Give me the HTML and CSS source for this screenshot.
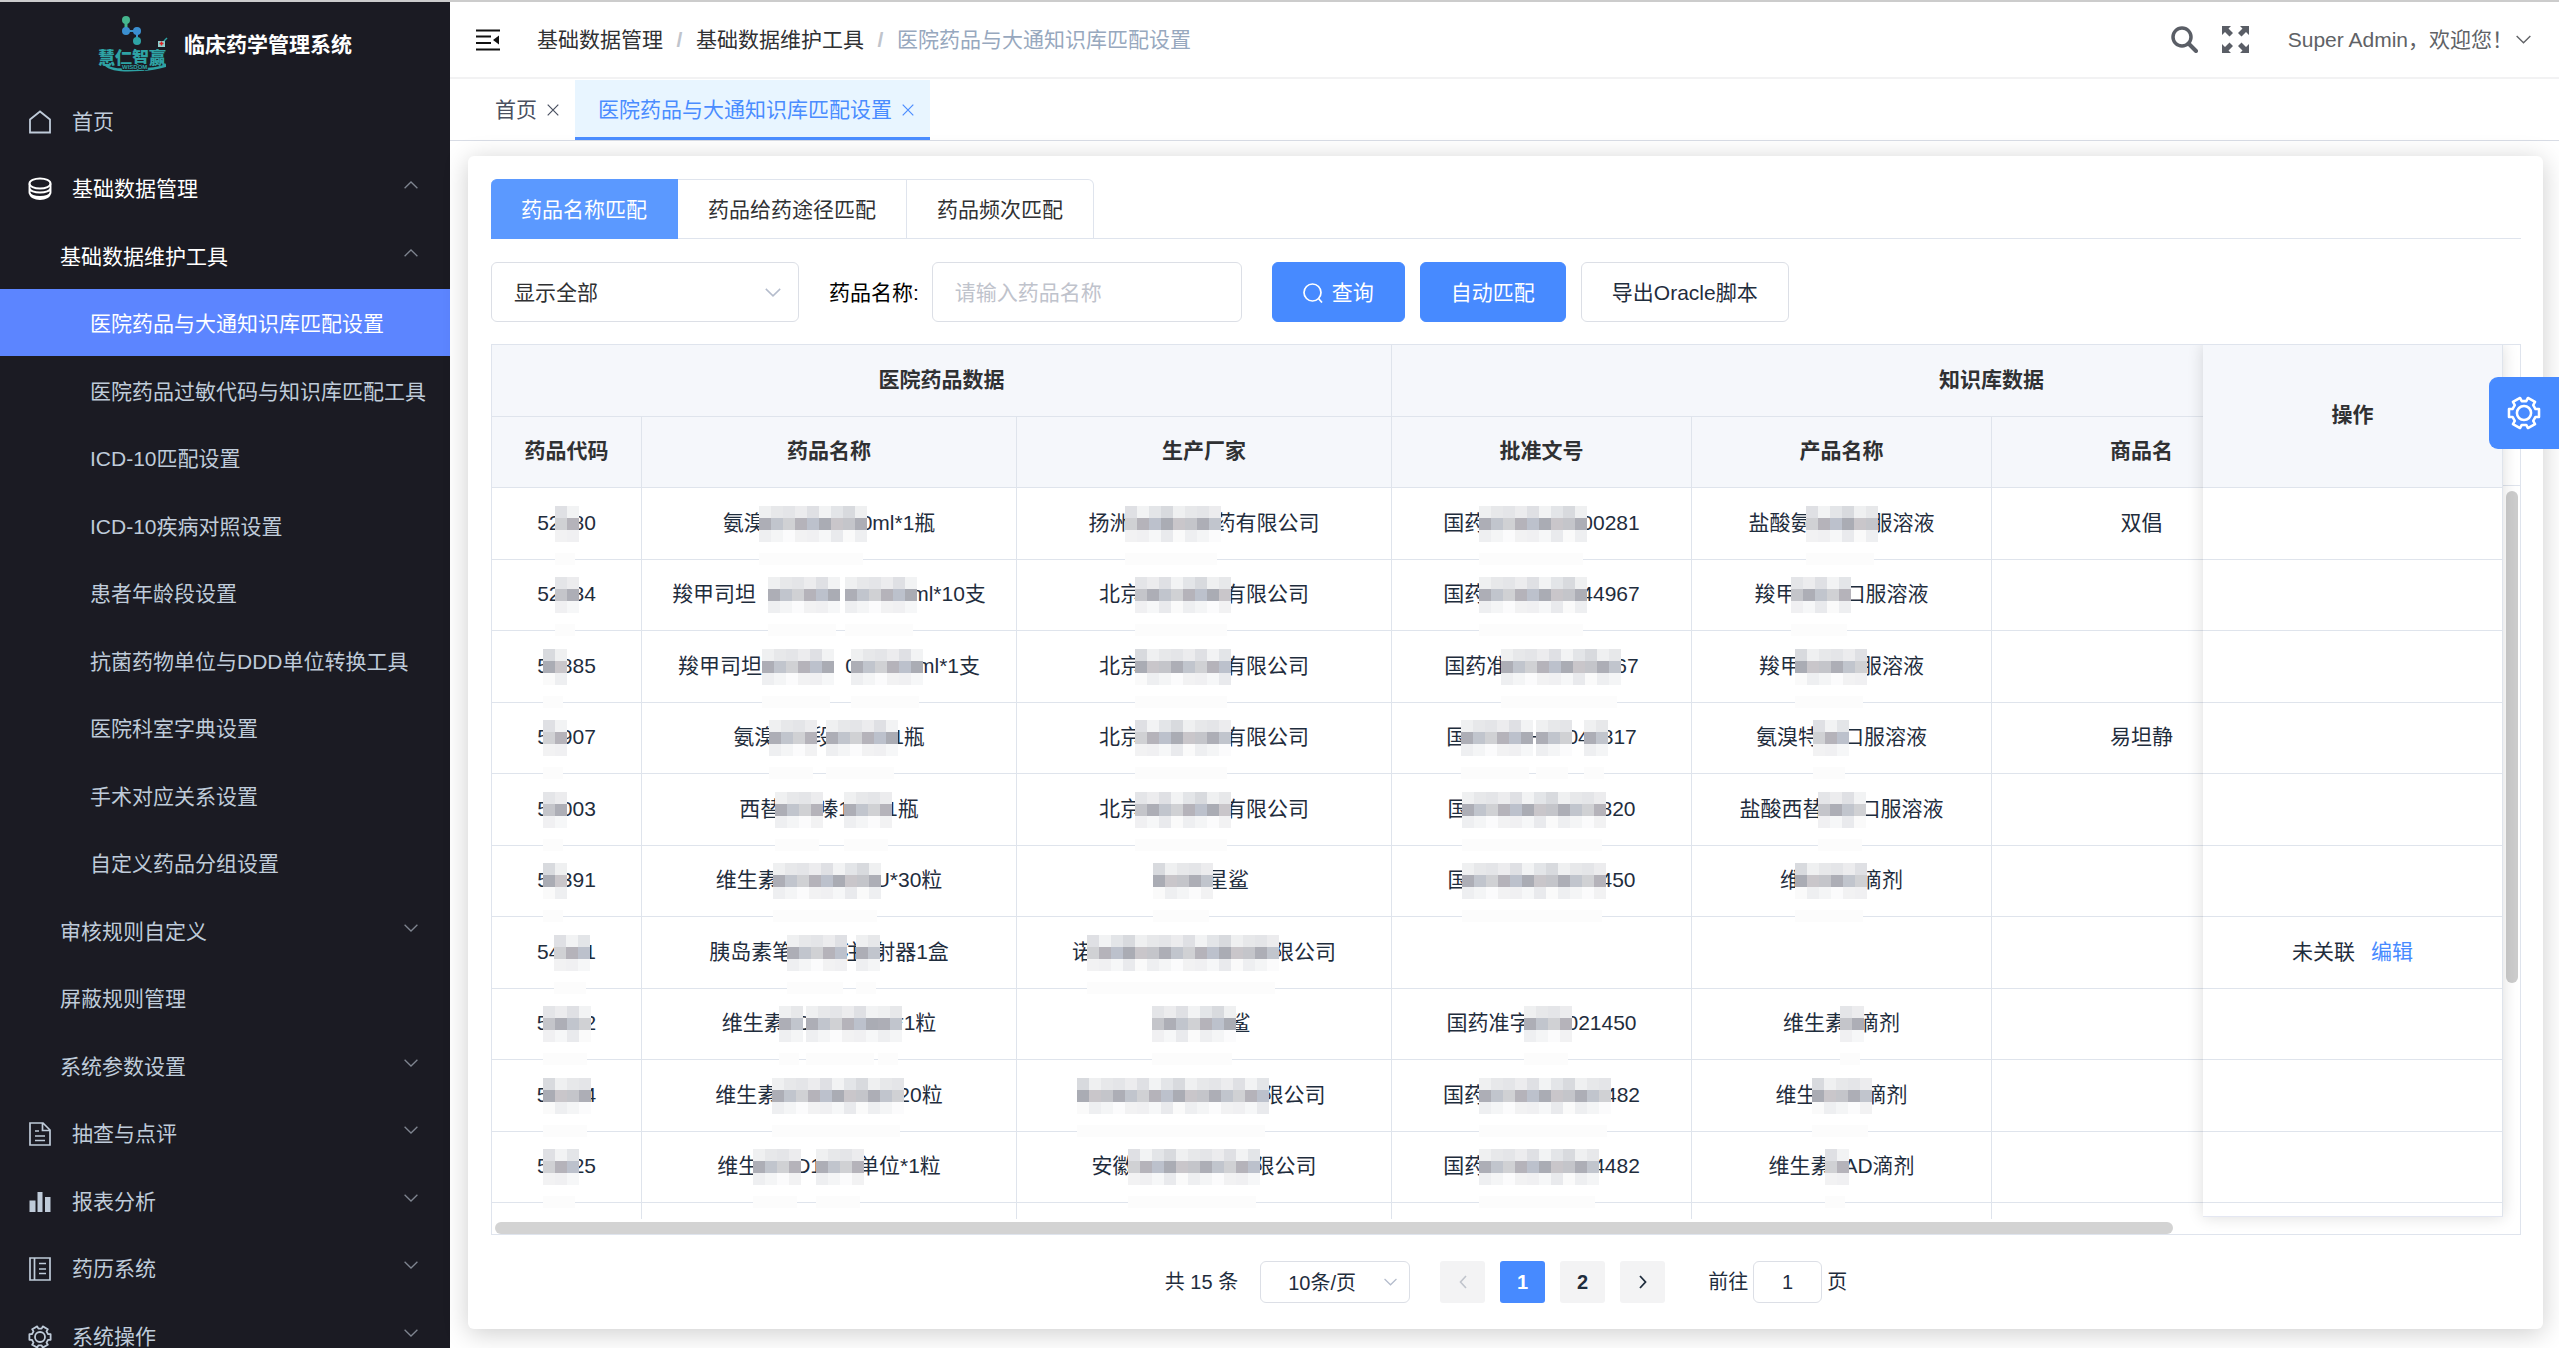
FILE: index.html
```html
<!DOCTYPE html>
<html lang="zh-CN">
<head>
<meta charset="utf-8">
<title>临床药学管理系统</title>
<link rel="stylesheet" href="styles.css">
</head>
<body>
<svg class="defs" aria-hidden="true">
  <symbol id="i-down" viewBox="0 0 14 8"><path d="M.6.8 7 7 13.4.8" fill="none" stroke="currentColor" stroke-width="1.3"/></symbol>
  <symbol id="i-up" viewBox="0 0 14 8"><path d="M.6 7.2 7 1l6.400 6.200" fill="none" stroke="currentColor" stroke-width="1.3"/></symbol>
  <symbol id="i-close" viewBox="0 0 12 12"><path d="M.7.7 11.300 11.300M11.300.7.7 11.300" fill="none" stroke="currentColor" stroke-width="1.200"/></symbol>
  <symbol id="i-gear" viewBox="0 0 24 24"><g fill="none" stroke="currentColor" stroke-width="1.800" stroke-linejoin="round"><path d="M20.100 9.200 22.600 9.200V14.800H20.100L18.500 17.600 19.800 19.800 14.800 22.600 13.600 20.400H10.400L9.200 22.600 4.200 19.800 5.500 17.600 3.900 14.800H1.400V9.200H3.900L5.500 6.400 4.200 4.200 9.200 1.400 10.400 3.600H13.600L14.800 1.400 19.800 4.200 18.500 6.400Z"/><circle cx="12" cy="12" r="5"/></g></symbol>
</svg>
<div class="app">
  <aside class="sidebar">
    <div class="brand">
      <svg class="logo" viewBox="0 0 72 60" aria-hidden="true">
        <path d="M29 6V16H40V26" fill="none" stroke="#3a93c8" stroke-width="2"/>
        <path d="M29 6v8" stroke="#45b58d" stroke-width="3"/>
        <circle cx="29" cy="5" r="4" fill="#45b58d"/><circle cx="29" cy="16" r="4" fill="#3b8fd0"/><circle cx="40" cy="16" r="4" fill="#3b8fd0"/><circle cx="40" cy="26" r="4" fill="#2ea3a5"/>
        <path d="M61 26h7v6h-7z" fill="#8fd0cf"/><path d="m67 26 3-3" stroke="#2ea3a5" stroke-width="1.500"/>
        <path d="M64.500 26.500v4M62.500 28.500h4" stroke="#e02020" stroke-width="1.500"/>
        <text class="logo-name" x="1" y="49">慧仁智赢</text>
        <path d="M7 50c6 7 22 7 36 6 10 0 18-2 26-4v-3c-8 3-16 4-26 4-14 1-28 1-32-3z" fill="#2ea3a5"/>
        <text class="logo-sub" x="25" y="54">WISDOM</text>
      </svg>
      <h1 class="brand-title">临床药学管理系统</h1>
    </div>
    <ul class="menu">
      <li><a href="#" class="l1"><svg class="mi" viewBox="0 0 24 24"><path d="M2 22.500V9.500L12 1.500l10 8v13z" fill="none" stroke="currentColor" stroke-width="1.800"/></svg>首页</a></li>
      <li><a href="#" class="l1 open"><svg class="mi" viewBox="0 0 24 24"><g fill="none" stroke="currentColor" stroke-width="1.900"><ellipse cx="12" cy="6.500" rx="10.500" ry="5"/><path d="M1.500 6.500v4.500c0 6 21 6 21 0V6.500M1.500 11v4.500c0 6 21 6 21 0V11M2 16c0 8 20 8 20 0"/></g></svg>基础数据管理<svg class="arrow"><use href="#i-up"/></svg></a></li>
      <li><a href="#" class="l2 open">基础数据维护工具<svg class="arrow"><use href="#i-up"/></svg></a></li>
      <li><a href="#" class="l3 active">医院药品与大通知识库匹配设置</a></li>
      <li><a href="#" class="l3">医院药品过敏代码与知识库匹配工具</a></li>
      <li><a href="#" class="l3">ICD-10匹配设置</a></li>
      <li><a href="#" class="l3">ICD-10疾病对照设置</a></li>
      <li><a href="#" class="l3">患者年龄段设置</a></li>
      <li><a href="#" class="l3">抗菌药物单位与DDD单位转换工具</a></li>
      <li><a href="#" class="l3">医院科室字典设置</a></li>
      <li><a href="#" class="l3">手术对应关系设置</a></li>
      <li><a href="#" class="l3">自定义药品分组设置</a></li>
      <li><a href="#" class="l2">审核规则自定义<svg class="arrow"><use href="#i-down"/></svg></a></li>
      <li><a href="#" class="l2">屏蔽规则管理</a></li>
      <li><a href="#" class="l2">系统参数设置<svg class="arrow"><use href="#i-down"/></svg></a></li>
      <li><a href="#" class="l1"><svg class="mi" viewBox="0 0 24 24"><path d="M2 1h13l7 7v15H2zM14.500 1v7.500H22M7 9h4M7 14h10M7 18.500h10" fill="none" stroke="currentColor" stroke-width="1.700"/></svg>抽查与点评<svg class="arrow"><use href="#i-down"/></svg></a></li>
      <li><a href="#" class="l1"><svg class="mi" viewBox="0 0 24 24"><path d="M1.500 10.500h6V22h-6zM9.500 2h5v20h-5zM17 7h5.500v15H17z" fill="currentColor"/></svg>报表分析<svg class="arrow"><use href="#i-down"/></svg></a></li>
      <li><a href="#" class="l1"><svg class="mi" viewBox="0 0 24 24"><path d="M2 1h20v22H2zM6.500 1v22M11 6.500h7M11 12h7M11 16.500h7" fill="none" stroke="currentColor" stroke-width="1.700"/></svg>药历系统<svg class="arrow"><use href="#i-down"/></svg></a></li>
      <li><a href="#" class="l1"><svg class="mi"><use href="#i-gear"/></svg>系统操作<svg class="arrow"><use href="#i-down"/></svg></a></li>
    </ul>
  </aside>

  <main class="main">
    <header class="topbar">
      <button class="plain" aria-label="折叠菜单"><svg class="burger" viewBox="0 0 24 22"><path d="M0 1.500h24M0 7.500h15M0 14h15M0 20.500h24" stroke="#111" stroke-width="2"/><path d="M23 6.500v9l-6-4.500z" fill="#111"/></svg></button>
      <nav class="crumbs"><a href="#">基础数据管理</a><i>/</i><a href="#">基础数据维护工具</a><i>/</i><span>医院药品与大通知识库匹配设置</span></nav>
      <div class="tools">
        <button class="plain" aria-label="搜索"><svg class="tool" viewBox="0 0 27 27"><circle cx="11" cy="11" r="9" fill="none" stroke="currentColor" stroke-width="3.500"/><path d="m17.500 17.500 7.500 7.500" stroke="currentColor" stroke-width="4" stroke-linecap="round"/></svg></button>
        <button class="plain" aria-label="全屏"><svg class="tool" viewBox="0 0 27 27"><path d="M0 0h9L6.500 2.500 11 7 7.500 10.500 3 6 0 9zM27 0v9l-3-3-4.500 4.500L16 7l4.500-4.500L18 0zM0 27v-9l3 3 4.500-4.500L11 20l-4.500 4.500L9 27zM27 27h-9l2.500-2.500L16 20l3.500-3.500L24 21l3-3z" fill="currentColor"/></svg></button>
        <button class="plain user">Super Admin，欢迎您！<svg class="user-arrow"><use href="#i-down"/></svg></button>
      </div>
    </header>
    <nav class="views">
      <a href="#" class="view">首页<svg><use href="#i-close"/></svg></a>
      <a href="#" class="view current">医院药品与大通知识库匹配设置<svg><use href="#i-close"/></svg></a>
    </nav>

    <section class="card">
      <div class="tabs" role="tablist">
        <button role="tab" class="tab on" aria-selected="true">药品名称匹配</button>
        <button role="tab" class="tab">药品给药途径匹配</button>
        <button role="tab" class="tab">药品频次匹配</button>
      </div>
      <form class="filters">
        <div class="picker picker-wide">
          <select aria-label="显示范围"><option>显示全部</option></select>
          <svg><use href="#i-down"/></svg>
        </div>
        <label for="drug">药品名称:</label>
        <input id="drug" type="text" placeholder="请输入药品名称">
        <button type="button" class="btn primary query"><svg viewBox="0 0 20 20"><circle cx="9.500" cy="9.500" r="8.500" fill="none" stroke="currentColor" stroke-width="1.700"/><path d="m15.500 15.500 3.500 4" stroke="currentColor" stroke-width="1.700"/></svg>查询</button>
        <button type="button" class="btn primary">自动匹配</button>
        <button type="button" class="btn">导出Oracle脚本</button>
      </form>

      <div class="grid">
        <div class="grid-main">
          <table class="data">
            <colgroup><col class="c-code"><col class="c-name"><col class="c-name"><col class="c-kb"><col class="c-kb"><col class="c-kb"><col class="c-kb"></colgroup>
            <thead>
              <tr><th colspan="3">医院药品数据</th><th colspan="4">知识库数据</th></tr>
              <tr><th>药品代码</th><th>药品名称</th><th>生产厂家</th><th>批准文号</th><th>产品名称</th><th>商品名</th><th></th></tr>
            </thead>
            <tbody>
              <tr><td>52<i class="m w24"></i>80</td><td>氨溴<i class="m w108"></i>0ml*1瓶</td><td>扬洲<i class="m w96"></i>药有限公司</td><td>国药<i class="m w108"></i>00281</td><td>盐酸氨<i class="m w72"></i>服溶液</td><td>双倡</td><td></td></tr>
              <tr><td>52<i class="m w24"></i>84</td><td>羧甲司坦&nbsp;&nbsp;&nbsp;<i class="m w72"></i>&nbsp;&nbsp;&nbsp;<i class="m w72"></i>ml*10支</td><td>北京<i class="m w96"></i>有限公司</td><td>国药<i class="m w108"></i>44967</td><td>羧甲<i class="m w60"></i>口服溶液</td><td></td><td></td></tr>
              <tr><td>5<i class="m w24"></i>885</td><td>羧甲司坦&nbsp;<i class="m w72"></i>&nbsp;&nbsp;&nbsp;0<i class="m w72"></i>ml*1支</td><td>北京<i class="m w96"></i>有限公司</td><td>国药准<i class="m w120"></i>67</td><td>羧甲<i class="m w72"></i>服溶液</td><td></td><td></td></tr>
              <tr><td>5<i class="m w24"></i>907</td><td>氨溴<i class="m w48"></i>段<i class="m w72"></i>1瓶</td><td>北京<i class="m w96"></i>有限公司</td><td>国<i class="m w72"></i>H<i class="m w36"></i>04<i class="m w24"></i>817</td><td>氨溴特<i class="m w36"></i>口服溶液</td><td>易坦静</td><td></td></tr>
              <tr><td>5<i class="m w24"></i>003</td><td>西替<i class="m w48"></i>嗪1<i class="m w48"></i>1瓶</td><td>北京<i class="m w96"></i>有限公司</td><td>国<i class="m w144"></i>820</td><td>盐酸西替<i class="m w48"></i>口服溶液</td><td></td><td></td></tr>
              <tr><td>5<i class="m w24"></i>391</td><td>维生素<i class="m w108"></i>U*30粒</td><td><i class="m w60"></i>星鲨</td><td>国<i class="m w144"></i>450</td><td>维<i class="m w72"></i>滴剂</td><td></td><td></td></tr>
              <tr><td>54<i class="m w36"></i>1</td><td>胰岛素笔<i class="m w60"></i>注<i class="m w24"></i>射器1盒</td><td>诺<i class="m w192"></i>限公司</td><td></td><td></td><td></td><td></td></tr>
              <tr><td>5<i class="m w48"></i>2</td><td>维生素<i class="m w24"></i>D<i class="m w72"></i>0<i class="m w24"></i>*1粒</td><td><i class="m w84"></i>鲨</td><td>国药准字<i class="m w48"></i>021450</td><td>维生素<i class="m w24"></i>滴剂</td><td></td><td></td></tr>
              <tr><td>5<i class="m w48"></i>4</td><td>维生素<i class="m w132"></i>20粒</td><td><i class="m w192"></i>限公司</td><td>国药<i class="m w132"></i>482</td><td>维生<i class="m w60"></i>滴剂</td><td></td><td></td></tr>
              <tr><td>5<i class="m w36"></i>25</td><td>维生<i class="m w48"></i>D1<i class="m w48"></i>单位*1粒</td><td>安徽<i class="m w132"></i>限公司</td><td>国药<i class="m w120"></i>4482</td><td>维生素<i class="m w24"></i>AD滴剂</td><td></td><td></td></tr>
              <tr><td></td><td></td><td></td><td></td><td></td><td></td><td></td></tr>
            </tbody>
          </table>
        </div>
        <div class="grid-fixed">
          <table class="data">
            <thead><tr><th class="tall">操作</th></tr></thead>
            <tbody>
              <tr><td></td></tr><tr><td></td></tr><tr><td></td></tr><tr><td></td></tr><tr><td></td></tr><tr><td></td></tr>
              <tr><td>未关联<a href="#" class="edit">编辑</a></td></tr>
              <tr><td></td></tr><tr><td></td></tr><tr><td></td></tr><tr><td></td></tr>
            </tbody>
          </table>
        </div>
        <div class="gutter"><div class="gutter-head"></div><div class="v-thumb"></div></div>
        <div class="h-track"><div class="h-thumb"></div></div>
      </div>

      <nav class="pager">
        <span class="total">共 15 条</span>
        <div class="picker picker-page">
          <select aria-label="每页条数"><option>10条/页</option></select>
          <svg><use href="#i-down"/></svg>
        </div>
        <button class="pg" disabled aria-label="上一页"><svg viewBox="0 0 8 14"><path d="M7 1 1.500 7 7 13" fill="none" stroke="currentColor" stroke-width="1.600"/></svg></button>
        <button class="pg on">1</button>
        <button class="pg">2</button>
        <button class="pg" aria-label="下一页"><svg viewBox="0 0 8 14"><path d="M1 1l5.500 6L1 13" fill="none" stroke="currentColor" stroke-width="1.800"/></svg></button>
        <label class="jump">前往<input type="text" value="1">页</label>
      </nav>
    </section>
  </main>
</div>
<button class="settings" aria-label="系统设置"><svg><use href="#i-gear"/></svg></button>
</body>
</html>
```
FILE: styles.css
```css
* { box-sizing: border-box; }
body {
  margin: 0;
  font: 21px/30px "Liberation Sans", "Noto Sans CJK SC", sans-serif;
  color: #303133;
  background: #fff;
}
a { color: inherit; text-decoration: none; }
button, input, select { font: inherit; color: inherit; }
svg { display: block; flex: none; }
.defs { position: absolute; width: 0; height: 0; }
.plain { border: 0; background: none; padding: 0; }

.app { display: flex; height: 100vh; overflow: hidden; border-top: 2px solid #ccc; }

/* sidebar */
.sidebar { flex: 0 0 450px; background: #1b1b23; color: #bfcbd9; overflow: hidden; }
.brand { display: flex; align-items: center; gap: 15px; height: 84px; padding: 2px 0 0 97px; }
.logo { width: 72px; height: 60px; }
.logo-name { font: 900 17px "Noto Sans CJK SC", sans-serif; fill: #2ea3a5; }
.logo-sub { font: bold 6px "Liberation Sans", sans-serif; fill: #2ea3a5; stroke: #1b1b23; stroke-width: 2px; paint-order: stroke; }
.brand-title { margin: 0; font-size: 21px; line-height: 30px; color: #fff; }
.menu { margin: 0; padding: 0; list-style: none; }
.menu a { display: flex; align-items: center; height: 67px; padding: 3px 32px 0 0; white-space: nowrap; }
.menu li:nth-child(odd) a { height: 68px; }
.menu .l1 { padding-left: 28px; gap: 20px; }
.menu .l2 { padding-left: 60px; }
.menu .l3 { padding-left: 90px; padding-right: 0; }
.menu .open { color: #fff; }
.menu .active { background: #5c85ff; color: #fff; }
.mi { width: 24px; height: 24px; }
.arrow { width: 14px; height: 8px; margin: 0 0 8px auto; color: #7f8590; }

/* header */
.main { flex: 1; min-width: 0; }
.topbar { display: flex; align-items: center; height: 77px; padding: 0 28px 0 26px; border-bottom: 2px solid #f2f2f3; }
.burger { width: 24px; height: 22px; }
.crumbs { display: flex; margin-left: 37px; }
.crumbs i { width: 33px; text-align: center; font-weight: bold; font-style: normal; color: #c0c4cc; }
.crumbs span { color: #97a8be; }
.tools { display: flex; align-items: center; margin-left: auto; gap: 24px; color: #5a5e66; }
.tool { width: 27px; height: 27px; }
.user { display: flex; align-items: center; margin-left: 15px; gap: 3px; color: #606266; }
.user-arrow { width: 15px; height: 9px; }
.views { display: flex; height: 62px; padding: 1px 0 0 22px; border-bottom: 1px solid #d8dce5; }
.view { display: flex; align-items: center; gap: 10px; padding: 2px 16px 0 23px; color: #495060; border-bottom: 3px solid transparent; }
.view svg { width: 12px; height: 12px; }
.view.current { background: #e8f5ff; color: #4a8cff; border-color: #4a8cff; }

/* card */
.card { margin: 15px 16px 0 18px; padding: 23px 22px 26px 23px; border-radius: 6px; background: #fff; box-shadow: 0 4px 26px rgba(0, 0, 0, .2); }
.tabs { display: flex; height: 60px; border-bottom: 1px solid #dfe4ed; }
.tab { height: 60px; padding: 2px 30px 0; border: 1px solid #dfe4ed; border-left: 0; background: #fff; }
.tab.on { background: #5b99ff; color: #fff; border-color: #5b99ff; border-radius: 6px 0 0 0; }
.tab:last-child { border-radius: 0 6px 0 0; }
.filters { display: flex; align-items: center; height: 60px; margin-top: 23px; }
.filters label { margin: 0 13px 0 30px; padding-top: 2px; color: #000; }
.filters input { width: 310px; height: 60px; padding: 2px 22px 0; border: 1px solid #dcdfe6; border-radius: 6px; background: #fff; }
::placeholder { color: #bfc3cc; opacity: 1; }
.picker { position: relative; border: 1px solid #dcdfe6; border-radius: 6px; }
.picker select { width: 100%; height: 100%; padding: 2px 22px 0; border: 0; background: none; appearance: none; }
.picker svg { position: absolute; right: 17px; top: 50%; width: 16px; height: 9px; margin-top: -4px; color: #b4bccc; pointer-events: none; }
.picker-wide { width: 308px; height: 60px; }
.btn { display: flex; align-items: center; gap: 9px; height: 60px; margin-left: 15px; padding: 1px 30px 0; border: 1px solid #dcdfe6; border-radius: 6px; background: #fff; color: #1f2d3d; }
.btn.primary { background: #478aff; border-color: #478aff; color: #fff; }
.btn.query { margin-left: 30px; }
.btn svg { width: 20px; height: 20px; }

/* data grid */
.grid { display: grid; grid-template: 874px 15px / minmax(0, 1fr) 300px 17px; margin-top: 22px; border: 1px solid #dfe4ed; overflow: hidden; }
.grid-main { overflow: hidden; }
.grid-fixed { height: 872px; overflow: hidden; background: #fff; border-bottom: 1px solid #e4e7f2; box-shadow: 0 0 15px rgba(0, 0, 0, .14); z-index: 2; }
.data { table-layout: fixed; border-spacing: 0; width: 2100px; color: #1f2d3d; }
.grid-fixed .data { width: 300px; }
.c-code { width: 150px; }
.c-name { width: 375px; }
.c-kb { width: 300px; }
.data th, .data td { padding: 0 0 2px; border: solid #dfe4ec; border-width: 0 1px 1px 0; text-align: center; white-space: nowrap; }
.data th { height: 71px; background: #f5f7fb; color: #303133; }
.data thead tr:first-child th { height: 72px; }
.data thead tr:first-child .tall { height: 143px; }
.data td { height: 71px; }
.data tbody tr:nth-child(odd) td { height: 72px; }
.edit { margin-left: 16px; color: #478aff; }

/* masked text: three bands of 12px blocks */
.m {
  display: inline-block; position: relative; z-index: 1; height: 36px; margin: -8px -6px; vertical-align: middle;
  background:
    linear-gradient(90deg, #e4e5e8 12px, #ececee 12px 24px, #dfe0e4 24px 36px, #f2f3f4 36px 48px, #e3e5e8 48px 60px, #d8dade 60px 72px, #eff0f1 72px 84px, #e7e8ea 84px) 0 0 / 96px 12px repeat-x,
    linear-gradient(90deg, #c4c5ca 12px, #adaeb6 12px 24px, #c1c5cd 24px 36px, #d0d1d4 36px 48px, #b5b3ba 48px 60px, #bcc1cc 60px 72px, #aaacb4 72px 84px, #c9c6ca 84px) 0 12px / 96px 12px repeat-x,
    linear-gradient(90deg, #f0f0f2 12px, #f6f7f8 12px 24px, #e9eaed 24px 36px, #fafafa 36px 48px, #eeeff1 48px 60px, #f4f5f6 60px 72px, #fbfbfc 72px 84px, #f2f2f3 84px) 0 24px / 96px 12px repeat-x;
}
.m::after { content: ""; position: absolute; left: 0; right: 4px; top: 47px; height: 12px; background: #fcfcfc; }
tr:nth-child(3n) .m { background-position: 36px 0, 24px 12px, 60px 24px; }
tr:nth-child(3n+1) .m { background-position: 72px 0, 60px 12px, 12px 24px; }
td:nth-child(even) .m { background-position: 24px 0, 84px 12px, 48px 24px; }
.w24 { width: 24px; }
.w36 { width: 36px; }
.w48 { width: 48px; }
.w60 { width: 60px; }
.w72 { width: 72px; }
.w84 { width: 84px; }
.w96 { width: 96px; }
.w108 { width: 108px; }
.w120 { width: 120px; }
.w132 { width: 132px; }
.w144 { width: 144px; }
.w192 { width: 192px; }

.gutter-head { height: 141px; border-bottom: 1px solid #dfe4ed; }
.v-thumb { width: 12px; height: 492px; margin: 5px 0 0 3px; border-radius: 6px; background: #ccc; }
.h-track { grid-column: 1 / -1; padding: 3px 3px 0; }
.h-thumb { width: 83%; height: 12px; border-radius: 6px; background: #d3d3d3; }

/* pagination */
.pager { display: flex; justify-content: center; margin-top: 26px; font-size: 20px; line-height: 42px; color: #1f2d3d; }
.picker-page { width: 150px; height: 42px; margin: 0 15px 0 22px; }
.picker-page select { padding: 0 27px; }
.picker-page svg { right: 12px; width: 13px; height: 8px; }
.pg { display: flex; align-items: center; justify-content: center; width: 45px; height: 42px; margin-left: 15px; padding: 0; border: 0; border-radius: 3px; background: #f3f3f4; font-weight: bold; color: #1f2d3d; }
.pg svg { width: 8px; height: 14px; }
.pg:disabled { color: #c0c4cc; }
.pg.on { background: #478aff; color: #fff; }
.jump { display: flex; margin-left: 43px; gap: 5px; }
.jump input { width: 69px; height: 42px; padding: 0; border: 1px solid #dcdfe6; border-radius: 6px; text-align: center; }

.settings { position: fixed; right: 0; top: 377px; display: flex; align-items: center; justify-content: center; width: 70px; height: 72px; padding: 0; border: 0; border-radius: 9px 0 0 9px; background: #478aff; color: #fff; z-index: 5; }
.settings svg { width: 34px; height: 34px; }
```
